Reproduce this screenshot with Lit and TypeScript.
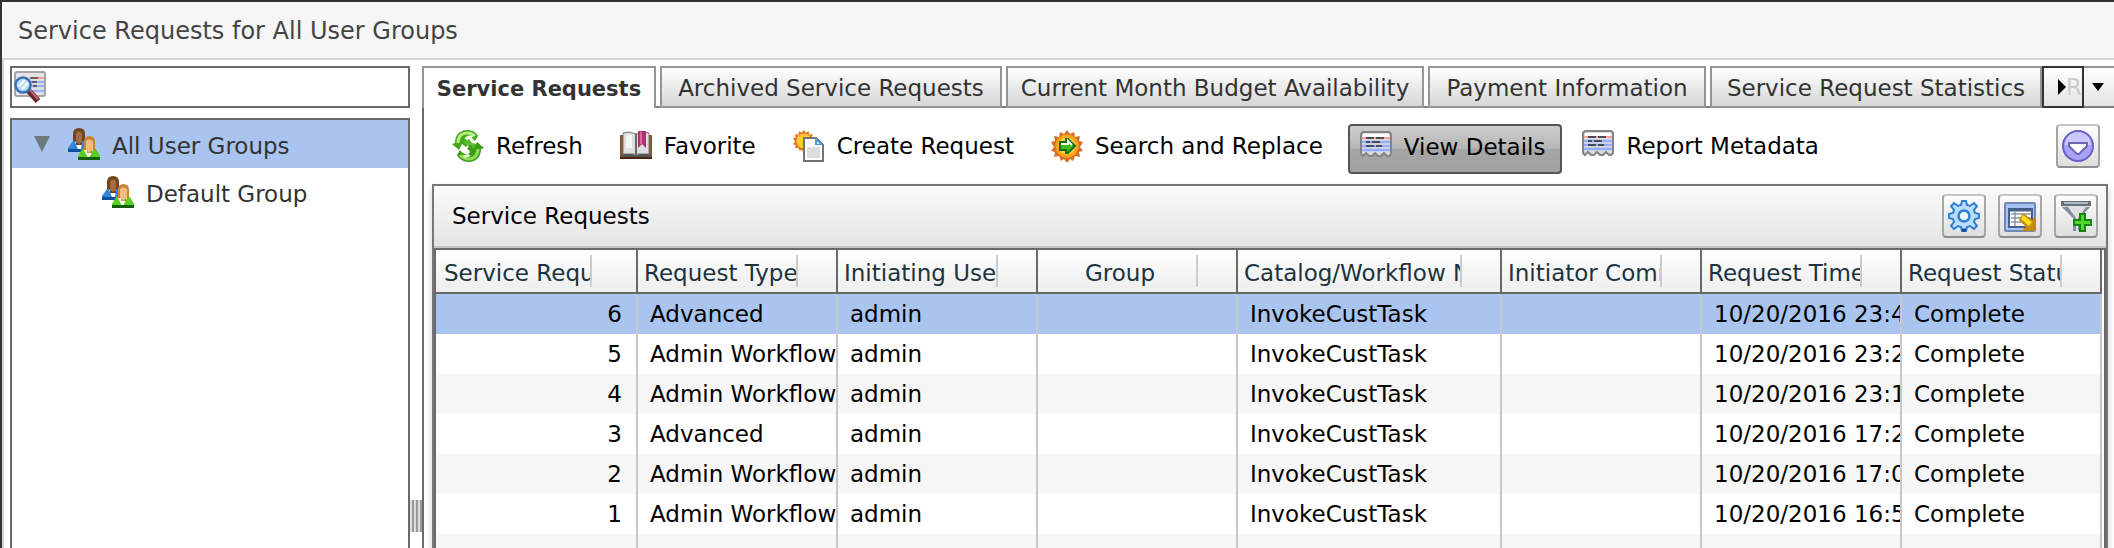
import { LitElement, html, css, svg, nothing } from "lit";
import { customElement, state } from "lit/decorators.js";
import { classMap } from "lit/directives/class-map.js";
import { styleMap } from "lit/directives/style-map.js";

const icon = (body: unknown) => html`<svg class="icon" viewBox="0 0 32 32" aria-hidden="true">${body}</svg>`;

const STAR_BURST = "M16 0l3 4 4-2 1 5 5-1-1 5 4 1-3 5 3 4-4 1 1 5-5-1-2 5-3-2-3 5-3-5-3 2-2-5-5 1 1-5-4-1 3-4-3-5 4-1-1-5 5 1 1-5 4 2z";

const icons = {
  users: () => icon(svg`
    <path d="M5 13h11l2 11H0v-4z" fill="#2f86dc"/>
    <path d="M0 21h18v3H0z" fill="#0c509f"/>
    <path d="M7 14h7l-1 7h-3z" fill="#fff"/>
    <path d="M5 6q0-6 6-6t6 6v7h-3v4H8v-4H5z" fill="#73451c"/>
    <path d="M8 5q3-3 6 0v9l-3 2-3-2z" fill="#a46c42"/>
    <path d="M14 21h14l4 7v4H10v-4z" fill="#56cf22"/>
    <path d="M10 29h22v3H10z" fill="#155f0b"/>
    <path d="M16 22h9l-3.500 7h-2z" fill="#fff"/>
    <path d="M16 14q0-6 5.500-6t5.500 6v8h-3v3h-5v-3h-3z" fill="#c98632"/>
    <path d="M18 13q3-3 7 0v8l-4 4-3-4z" fill="#f3bc80"/>`),
  search: () => icon(svg`
    <rect x="1" y="1" width="30" height="24" rx="2" fill="#e4e4e6" stroke="#a5a5a8" stroke-width="2"/>
    <path d="M17 7h13" stroke="#ff9d9d" stroke-width="2"/>
    <path d="M17 11h13M17 15h13M19 20h11" stroke="#9fb4f5" stroke-width="2.500"/>
    <path d="M16 7h8M18 11h5M19 15h4" stroke="#444" stroke-width="1.600"/>
    <path d="M14 19L24 30" stroke="#6d2527" stroke-width="6"/>
    <path d="M15 18L24 28" stroke="#b86a6a" stroke-width="2"/>
    <circle cx="9" cy="14" r="7.500" fill="#b9dcfa" stroke="#3871b4" stroke-width="2.500"/>
    <path d="M5 15l6-6M8 18l6-6" stroke="#fff" stroke-width="2"/>`),
  refresh: () => icon(svg`
    <path d="M3 13C3 5 8 0 15 0c5 0 9 2 11 6l-3 5c-2-3-4-4-7-3-3 1-2 4 1 5l-3 4-4-3-3 6-7-6z" fill="#43a81b"/>
    <path d="M6 13C6 6 10 3 15 3c4 0 6 1 8 3" fill="none" stroke="#b4ee83" stroke-width="3"/>
    <path d="M11 12l6-3 3 4 5 1-1 4-7-1z" fill="#5dbd30"/>
    <path d="M29 19c0 8-5 13-12 13-6 0-10-3-12-7l3-5c2 3 5 5 8 4 3-1 2-4-1-5l3-4 4 3 3-6 7 6z" fill="#389d12"/>
    <path d="M26 19c0 6-4 10-9 10-4 0-7-2-9-4" fill="none" stroke="#91dc58" stroke-width="3"/>
    <path d="M12 9l3-3 7-1-3 4z" fill="#e9ffdc"/>
    <path d="M10 26l3 2 6-2-3-2z" fill="#d9fbc5"/>`),
  favorite: () => icon(svg`
    <path d="M0 5h3v20h26V5h3v24H0z" fill="#8a5632"/>
    <path d="M0 27h32v2H0z" fill="#4b2410"/>
    <path d="M3 3l6-1 7 2 7-2 6 1v21H3z" fill="#dedede" stroke="#777"/>
    <path d="M2 24h11l3 2 3-2h11v3H2z" fill="#555"/>
    <path d="M15 4h2v21h-2z" fill="#666"/>
    <path d="M6 5h6v13H6z" fill="#f6f6f6"/>
    <path d="M18 1h8v17l-4-4-4 4z" fill="#aa3572"/>
    <path d="M20 2h2v12h-2z" fill="#d86aa5"/>`),
  create: () => icon(svg`
    <g transform="scale(.68)"><path d="${STAR_BURST}" fill="#e0741c"/><circle cx="16" cy="16" r="11" fill="#ffc837"/></g>
    <path d="M11 8h12l7 7v16H11z" fill="#fff" stroke="#707478" stroke-width="2"/>
    <path d="M14 17h13v11H14z" fill="#dcdddd"/>
    <path d="M22 7l8 8h-8z" fill="#4a9be8"/>
    <path d="M24 11l3 3h-3z" fill="#d9efff"/>`),
  replace: () => icon(svg`
    <path d="${STAR_BURST}" fill="#d8702a"/>
    <circle cx="16" cy="16" r="11.500" fill="#ffa51c"/>
    <circle cx="16" cy="16" r="8.500" fill="#ffcf45"/>
    <path d="M9 12h6V9h2l7 7-7 7h-2v-3H9z" fill="#3fbf1f" stroke="#14701a" stroke-width="2"/>
    <path d="M10 14h7v-3l4 4" fill="none" stroke="#f2ffec" stroke-width="2"/>`),
  details: () => icon(svg`
    <path d="M3 1h26l2 2v20l-2 2h-2l-3-3-3 3h-3l-3-3-3 3h-3l-3-3-3 3H3l-2-2V3z" fill="#dcdcde" stroke="#858588" stroke-width="2"/>
    <path d="M3 3h26v3H3z" fill="#fff"/>
    <path d="M2 7h28" stroke="#ff9c9c" stroke-width="2"/>
    <path d="M2 11h28M2 15h28M2 19h28" stroke="#93adff" stroke-width="2.500"/>
    <path d="M6 7h8m2 0h8M6 11h4m2 0h8M6 15h8m2 0h6" stroke="#4b4b55" stroke-width="2"/>`),
  more: () => icon(svg`
    <circle cx="16" cy="16" r="15" fill="#aaa3fa" stroke="#675fc9" stroke-width="2"/>
    <path d="M3 15a13 13 0 0 1 26 0z" fill="#cbc8fd"/>
    <path d="M7 13h18v3l-8 8h-2l-8-8z" fill="#fff" stroke="#6e67b3" stroke-width="2"/>`),
  gear: () => icon(svg`
    <path d="M14 1h4l1 4 3 1 4-3 3 3-3 4 1 3 4 1v4l-4 1-1 3 3 4-3 3-4-3-3 1-1 4h-4l-1-4-3-1-4 3-3-3 3-4-1-3-4-1v-4l4-1 1-3-3-4 3-3 4 3 3-1z" fill="#b9ddff" stroke="#2e7fd2" stroke-width="2"/>
    <circle cx="16" cy="16" r="5.500" fill="#eef7ff" stroke="#2e7fd2" stroke-width="2.500"/>
    <path d="M14 30h4" stroke="#0a4690" stroke-width="3"/>`),
  exportTable: () => icon(svg`
    <rect x="1" y="3" width="30" height="28" rx="1" fill="#a9c2f5" stroke="#7387b5" stroke-width="2"/>
    <rect x="5" y="9" width="23" height="18" fill="#fff" stroke="#44618a" stroke-width="2"/>
    <path d="M4 10h25" stroke="#44618a" stroke-width="3"/>
    <path d="M7 14h20M7 18h20M7 22h20M11 12v14" stroke="#8a97a8" stroke-width="1.500"/>
    <path d="M19 13l9 7 4-4v15H17l5-4-7-7z" fill="#c48a06"/>
    <path d="M19 15l9 7-3 4-8-7z" fill="#ffe11f"/>`),
  filter: () => icon(svg`
    <path d="M1 1h30v5l-11 12v13h-7V18L1 6z" fill="#dfe2e5"/>
    <path d="M1 1h30v5H1z" fill="#63707c"/>
    <path d="M4 3h24" stroke="#c8d0d8" stroke-width="1.500"/>
    <path d="M2 7l11 11v13h3V18L8 7zM30 7L20 18v13h-2V18l8-11z" fill="#87909a"/>
    <path d="M19 13h7v6h6v7h-6v6h-7v-6h-6v-7h6z" fill="#14860d"/>
    <path d="M21 15h3v6h6v3h-6v6h-3v-6h-6v-3h6z" fill="#53d62f"/>`),
};

interface Column { label: string; size: string; center?: boolean; numeric?: boolean }

const columns: Column[] = [
  { label: "Service Request ID", size: "first", numeric: true },
  { label: "Request Type", size: "normal" },
  { label: "Initiating User", size: "normal" },
  { label: "Group", size: "normal", center: true },
  { label: "Catalog/Workflow Name", size: "wide" },
  { label: "Initiator Comments", size: "normal" },
  { label: "Request Time", size: "normal" },
  { label: "Request Status", size: "normal" },
];

const rows: string[][] = [
  ["6", "Advanced", "admin", "", "InvokeCustTask", "", "10/20/2016 23:4", "Complete"],
  ["5", "Admin Workflow", "admin", "", "InvokeCustTask", "", "10/20/2016 23:2", "Complete"],
  ["4", "Admin Workflow", "admin", "", "InvokeCustTask", "", "10/20/2016 23:1", "Complete"],
  ["3", "Advanced", "admin", "", "InvokeCustTask", "", "10/20/2016 17:2", "Complete"],
  ["2", "Admin Workflow", "admin", "", "InvokeCustTask", "", "10/20/2016 17:0", "Complete"],
  ["1", "Admin Workflow", "admin", "", "InvokeCustTask", "", "10/20/2016 16:5", "Complete"],
  ["", "", "", "", "", "", "", ""],
];

const shared = css`
  * { box-sizing: border-box; }
  button, input { font: inherit; color: inherit; margin: 0; }
  button { cursor: pointer; white-space: nowrap; }
  .icon { width: 32px; height: 32px; flex: none; display: block; }
  .icon-button {
    width: 44px; height: 44px; padding: 4px; flex: none;
    border: 2px solid #a5a5a5; border-top-color: #c4c4c4; border-bottom-color: #8e8e8e; border-radius: 4px;
    background: linear-gradient(#fdfdfd, #dedede);
  }
`;

@customElement("group-sidebar")
export class GroupSidebar extends LitElement {
  static styles = [shared, css`
    :host { display: flex; flex-direction: column; gap: 10px; }
    .search { display: flex; align-items: center; height: 42px; padding: 0 2px; border: 2px solid #696969; background: #fff; }
    .search input { flex: 1; min-width: 0; height: 100%; border: 0; outline: 0; padding: 0 8px; background: none; }
    .tree { flex: 1; margin: 0; padding: 0; list-style: none; border: 2px solid #696969; background: #fff; }
    .node { display: flex; align-items: center; width: 100%; height: 48px; gap: 12px; padding: 0 0 0 22px; border: 0; background: none; text-align: left; color: #333; }
    .node.selected { background: #a9c4ef; }
    .node.child { padding-left: 90px; }
    .name { padding-top: 4px; }
    .caret { width: 0; margin-right: 6px; border: 8px solid transparent; border-top: 16px solid #6f7b7b; border-bottom: 0; }
  `];

  @state() private selected = "All User Groups";

  render() {
    const node = (name: string, child: boolean) => html`
      <li>
        <button class=${classMap({ node: true, child, selected: this.selected === name })} @click=${() => (this.selected = name)}>
          ${child ? nothing : html`<span class="caret"></span>`}${icons.users()}<span class="name">${name}</span>
        </button>
      </li>`;
    return html`
      <label class="search">${icons.search()}<input type="text" aria-label="Search groups" /></label>
      <ul class="tree">${node("All User Groups", false)}${node("Default Group", true)}</ul>`;
  }
}

@customElement("request-table")
export class RequestTable extends LitElement {
  static styles = [shared, css`
    :host { display: block; border: 2px solid #777; box-shadow: 0 4px 8px #d0d0d0; background: #fff; }
    .head { display: flex; align-items: center; gap: 12px; height: 62px; padding: 0 8px 0 18px; border-bottom: 2px solid #c4c4c4; background: linear-gradient(#fbfbfb, #e4e4e4); }
    .title { flex: 1; margin: 0; font-size: 23px; font-weight: 400; }
    .frame { border: 2px solid #696969; border-bottom: 0; padding-right: 2px; }
    table { width: 100%; table-layout: fixed; border-collapse: separate; border-spacing: 0; }
    .first { width: 202px; }
    .normal { width: 200px; }
    .wide { width: 264px; }
    th { height: 44px; padding: 0 38px 0 6px; border-right: 2px solid #696969; border-bottom: 2px solid #696969; background: linear-gradient(#fff, #ededed); font-weight: 400; text-align: left; color: #1c3340; }
    .label { display: block; height: 32px; padding-top: 2px; line-height: 32px; overflow: hidden; white-space: nowrap; border-right: 2px solid #ccc; }
    .first-label { padding-left: 8px; padding-right: 44px; }
    .center .label { text-align: center; }
    td { height: 40px; padding: 0 0 0 12px; border-right: 2px solid #c8c8c8; overflow: hidden; white-space: nowrap; }
    .numeric { text-align: right; padding: 0 14px 0 0; }
    tbody tr:nth-child(odd) { background: #f6f6f6; }
    tbody tr.selected { background: #a9c4ef; }
  `];

  @state() private selected = 0;

  render() {
    return html`
      <div class="head">
        <h2 class="title">Service Requests</h2>
        <button class="icon-button" aria-label="Settings">${icons.gear()}</button>
        <button class="icon-button" aria-label="Export">${icons.exportTable()}</button>
        <button class="icon-button" aria-label="Add filter">${icons.filter()}</button>
      </div>
      <div class="frame">
        <table>
          <colgroup>${columns.map((c) => html`<col class=${c.size} />`)}</colgroup>
          <thead>
            <tr>${columns.map((c) => html`
              <th scope="col" class=${classMap({ center: !!c.center, "first-label": !!c.numeric })}><span class="label">${c.label}</span></th>`)}
            </tr>
          </thead>
          <tbody>
            ${rows.map((row, i) => html`
              <tr class=${classMap({ selected: i === this.selected })} @click=${() => (this.selected = i)}>
                ${row.map((text, c) => html`<td class=${classMap({ numeric: !!columns[c].numeric })}>${text}</td>`)}
              </tr>`)}
          </tbody>
        </table>
      </div>`;
  }
}

const tabs = [
  { name: "Service Requests", width: 234 },
  { name: "Archived Service Requests", width: 342 },
  { name: "Current Month Budget Availability", width: 418 },
  { name: "Payment Information", width: 278 },
  { name: "Service Request Statistics", width: 332 },
];

const actions = [
  { label: "Refresh", icon: icons.refresh },
  { label: "Favorite", icon: icons.favorite },
  { label: "Create Request", icon: icons.create },
  { label: "Search and Replace", icon: icons.replace },
  { label: "View Details", icon: icons.details, pressed: true },
  { label: "Report Metadata", icon: icons.details },
];

@customElement("app-root")
export class AppRoot extends LitElement {
  static styles = [shared, css`
    :host { display: flex; flex-direction: column; height: 100vh; overflow: hidden; box-sizing: border-box; border-top: 2px solid #333; border-left: 2px solid #333; background: #fff; color: #000; font: 23px/28px "DejaVu Sans", sans-serif; }
    .title { margin: 0; padding: 15px 16px 13px; font-size: 24px; font-weight: 400; color: #444; background: #f6f6f6; border-bottom: 2px solid #d6d6d6; }
    .body { flex: 1; display: flex; min-height: 0; padding: 6px 0 0 6px; border-left: 2px solid #d6d6d6; }
    group-sidebar { flex: none; width: 400px; margin-bottom: -2px; }
    .splitter { display: flex; flex: none; width: 12px; padding-bottom: 16px; align-items: flex-end; justify-content: center; }
    .grip { width: 12px; height: 32px; background: repeating-linear-gradient(90deg, #ddd 0 2px, #999 2px 4px); }
    .main { flex: 1; min-width: 0; }
    .tabs { display: flex; gap: 4px; height: 42px; overflow: hidden; box-shadow: inset 0 -2px #808080; }
    .tab { flex: none; padding: 2px 0 0; border: 2px solid #959595; background: linear-gradient(#fff, #d6d6d6); color: #333; }
    .tab.active { border-bottom: 0; background: #fff; font-size: 21px; font-weight: 700; }
    .tab-nav { display: flex; flex: 1; margin-left: -4px; }
    .next { display: flex; align-items: center; width: 42px; padding: 0 0 0 14px; border: 2px solid #333; background: linear-gradient(#fff, #e4e4e4); }
    .list { flex: 1; padding: 0 0 0 8px; border: 0; border-top: 2px solid #959595; border-bottom: 2px solid #808080; background: linear-gradient(#fff, #e4e4e4); text-align: left; }
    .right { width: 0; border: 8px solid transparent; border-left-color: #000; border-right: 0; }
    .peek { color: #ccc; }
    .down { display: block; width: 0; border: 6px solid transparent; border-top: 8px solid #000; border-bottom: 0; }
    .pane { padding: 0 6px 0 8px; border-left: 2px solid #696969; }
    .toolbar { display: flex; align-items: flex-start; gap: 8px; height: 76px; padding: 16px 8px 0; }
    .action { display: flex; align-items: center; gap: 12px; height: 48px; padding: 0 15px 4px 10px; border: 2px solid transparent; border-radius: 4px; background: none; }
    .action.pressed { height: 50px; border-color: #555; background: linear-gradient(#cfcfcf, #b4b4b4 50%, #a6a6a6 50%, #a0a0a0); }
    .spacer { flex: 1; }
  `];

  @state() private active = 0;

  render() {
    return html`
      <h1 class="title">Service Requests for All User Groups</h1>
      <div class="body">
        <group-sidebar></group-sidebar>
        <div class="splitter"><div class="grip"></div></div>
        <main class="main">
          <div class="tabs" role="tablist">
            ${tabs.map((tab, i) => html`
              <button role="tab" aria-selected=${i === this.active} class=${classMap({ tab: true, active: i === this.active })}
                style=${styleMap({ width: `${tab.width}px` })} @click=${() => (this.active = i)}>${tab.name}</button>`)}
            <div class="tab-nav">
              <button class="next" aria-label="Next tabs"><span class="right"></span><span class="peek">R</span></button>
              <button class="list" aria-label="All tabs"><span class="down"></span></button>
            </div>
          </div>
          <div class="pane">
            <div class="toolbar">
              ${actions.map((a) => html`
                <button class=${classMap({ action: true, pressed: !!a.pressed })}>${a.icon()}<span>${a.label}</span></button>`)}
              <span class="spacer"></span>
              <button class="icon-button" aria-label="More actions">${icons.more()}</button>
            </div>
            <request-table></request-table>
          </div>
        </main>
      </div>`;
  }
}
